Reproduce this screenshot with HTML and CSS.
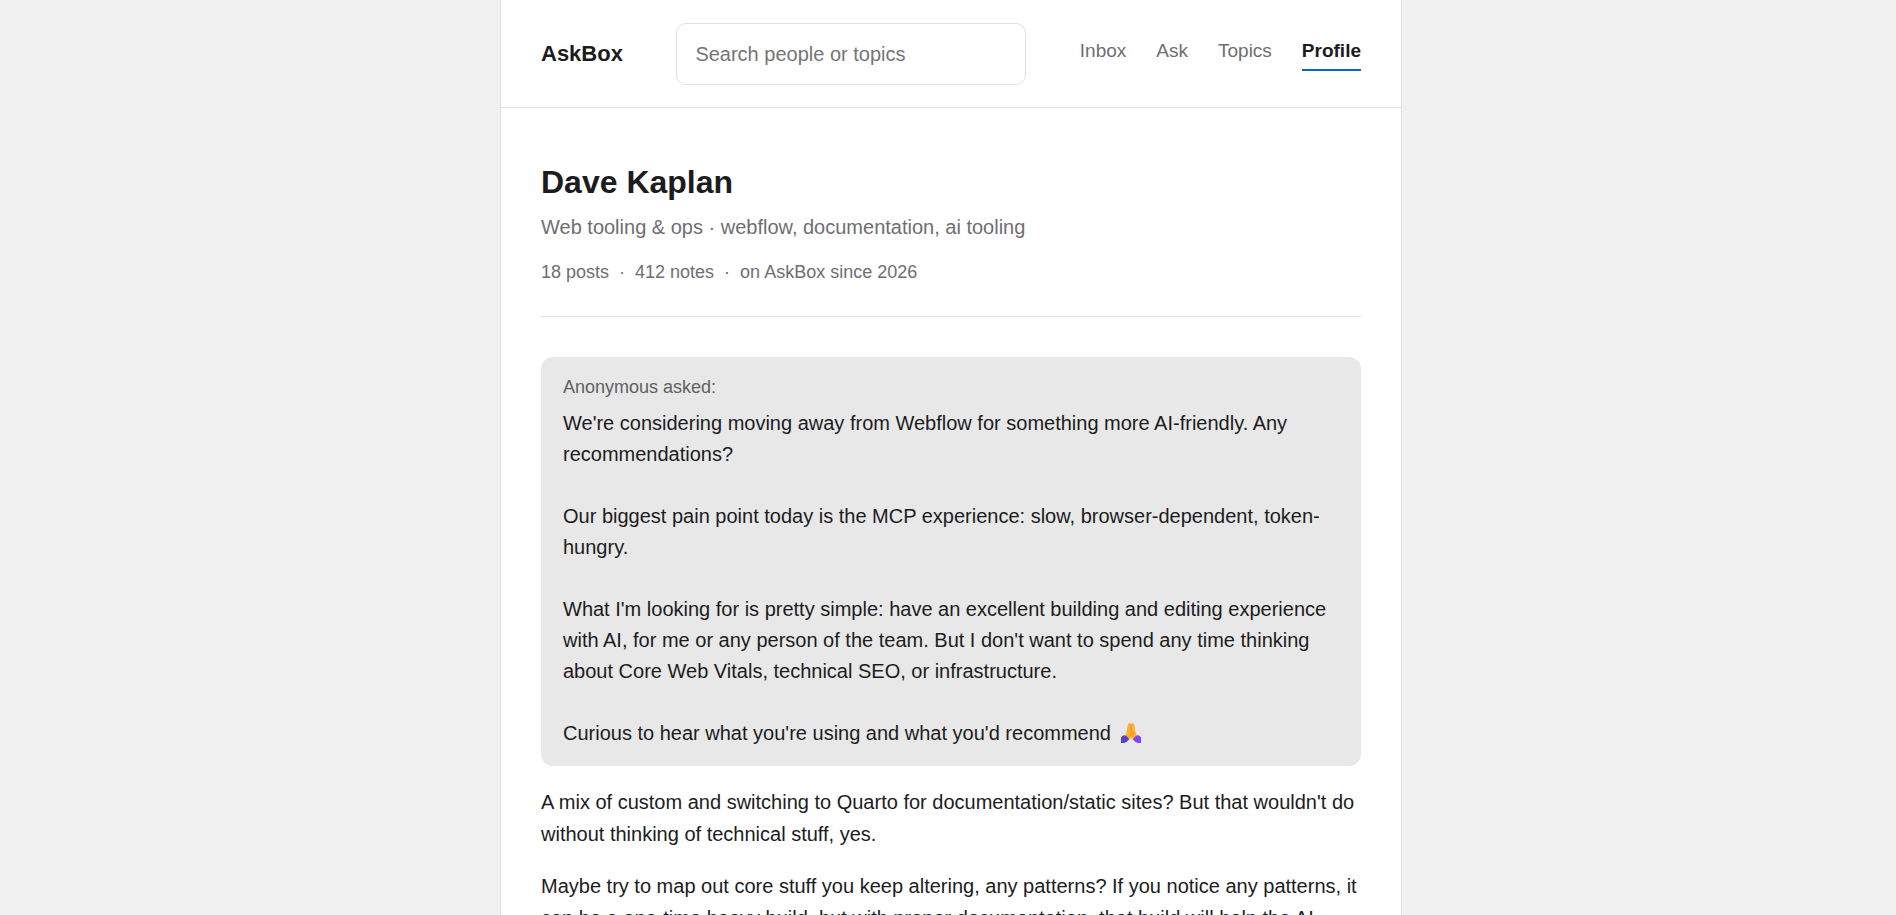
FILE: index.html
```html
<!DOCTYPE html>
<html lang="en">
<head>
<meta charset="utf-8">
<title>Dave Kaplan - AskBox</title>
<link rel="stylesheet" href="styles.css">
</head>
<body>
<div class="page">
  <header class="topbar">
    <a class="brand" href="#">AskBox</a>
    <input class="search" type="search" placeholder="Search people or topics" aria-label="Search people or topics">
    <nav class="nav">
      <a class="nav-link" href="#">Inbox</a>
      <a class="nav-link" href="#">Ask</a>
      <a class="nav-link" href="#">Topics</a>
      <a class="nav-link nav-link-active" href="#" aria-current="page">Profile</a>
    </nav>
  </header>
  <main class="content">
    <section class="profile">
      <h1 class="name">Dave Kaplan</h1>
      <p class="tagline">Web tooling &amp; ops · webflow, documentation, ai tooling</p>
      <p class="stats">18 posts &nbsp;·&nbsp; 412 notes &nbsp;·&nbsp; on AskBox since 2026</p>
    </section>
    <article class="post">
      <div class="question">
        <p class="asker">Anonymous asked:</p>
        <p class="question-text">We're considering moving away from Webflow for something more AI-friendly. Any recommendations?</p>
        <p class="question-text">Our biggest pain point today is the MCP experience: slow, browser-dependent, token-hungry.</p>
        <p class="question-text">What I'm looking for is pretty simple: have an excellent building and editing experience with AI, for me or any person of the team. But I don't want to spend any time thinking about Core Web Vitals, technical SEO, or infrastructure.</p>
        <p class="question-text">Curious to hear what you're using and what you'd recommend <svg class="emoji" viewBox="0 0 20 20" role="img" aria-label="Folded hands"><path fill="#ffb02e" d="M9.800 1C9.300-.2 7.400-.2 6.900 1.300L5.900 7.600C5.600 9.800 4.700 11.400 3.500 13L7 17.400C8.800 16.600 9.900 15.500 10 14C10.200 15.500 11.300 16.600 13 17.400L16.500 13C15.300 11.400 14.400 9.800 14.100 7.600L13.100 1.300C12.600-.2 10.400-.2 9.800 1Z"/><path stroke="#ef8b2c" stroke-width="1" fill="none" d="M10.100 1.500V14M12.200 8.500V12.500"/><path fill="#5b3fd0" d="M0 14.600C1 13 2.500 12.200 4 12.400C6 13.300 7.600 14.700 8 16.200C6.800 18 5 19.600 3 20H0Z"/><path fill="#7a4af0" d="M20 14.600C19 13 17.500 12.200 16 12.400C14 13.300 12.400 14.700 12 16.200C13.200 18 15 19.600 17 20H20Z"/></svg></p>
      </div>
      <p class="answer">A mix of custom and switching to Quarto for documentation/static sites? But that wouldn't do without thinking of technical stuff, yes.</p>
      <p class="answer">Maybe try to map out core stuff you keep altering, any patterns? If you notice any patterns, it can be a one-time heavy build, but with proper documentation, that build will help the AI</p>
    </article>
  </main>
</div>
</body>
</html>
```

FILE: styles.css
```css
* {
  box-sizing: border-box;
}

body {
  height: 100vh;
  margin: 0;
  padding-left: 6px;
  overflow: hidden;
  background: #f1f1f1;
  color: #1c1c1e;
  font: 20px/32px Arial, "Liberation Sans", sans-serif;
}

h1,
p {
  margin: 0;
}

.page {
  max-width: 902px;
  min-height: 100vh;
  margin: 0 auto;
  background: #fff;
  border: 1px solid #e0e0e0;
  border-width: 0 1px;
}

.topbar {
  display: flex;
  align-items: center;
  justify-content: space-between;
  padding: 23px 40px 22px;
  border-bottom: 1px solid #e0e0e0;
}

.brand {
  color: inherit;
  font-size: 22px;
  font-weight: 700;
  text-decoration: none;
}

.search {
  width: 350px;
  height: 62px;
  padding: 0 18px;
  border: 1px solid #e0e0e0;
  border-radius: 10px;
  background: #fff;
  color: inherit;
  font: inherit;
  appearance: none;
}

.search::placeholder {
  color: #757575;
}

.nav {
  display: flex;
  gap: 30px;
}

.nav-link {
  padding-bottom: 5px;
  border-bottom: 2px solid transparent;
  color: #6e6e73;
  font-size: 19px;
  line-height: 27px;
  text-decoration: none;
}

.nav-link-active {
  border-color: #0a66c2;
  color: #1c1c1e;
  font-weight: 700;
}

.content {
  padding: 54px 40px;
}

.profile {
  padding-bottom: 30px;
  border-bottom: 1px solid #e0e0e0;
}

.name {
  font-size: 32px;
  line-height: 40px;
}

.tagline {
  margin-top: 9px;
  color: #6e6e73;
}

.stats {
  margin-top: 15px;
  color: #6e6e73;
  font-size: 18px;
  line-height: 28px;
}

.post {
  display: grid;
  gap: 20px;
  margin-top: 40px;
}

.question {
  padding: 18px 22px 17px;
  border-radius: 12px;
  background: #e8e8e8;
}

.asker {
  margin-bottom: 8px;
  color: #5f5f63;
  font-size: 18px;
  line-height: 25px;
}

.question-text {
  line-height: 31px;
}

.question-text + .question-text {
  margin-top: 31px;
}

.emoji {
  width: 20px;
  height: 20px;
  margin-left: 4px;
  vertical-align: -3px;
}
```
